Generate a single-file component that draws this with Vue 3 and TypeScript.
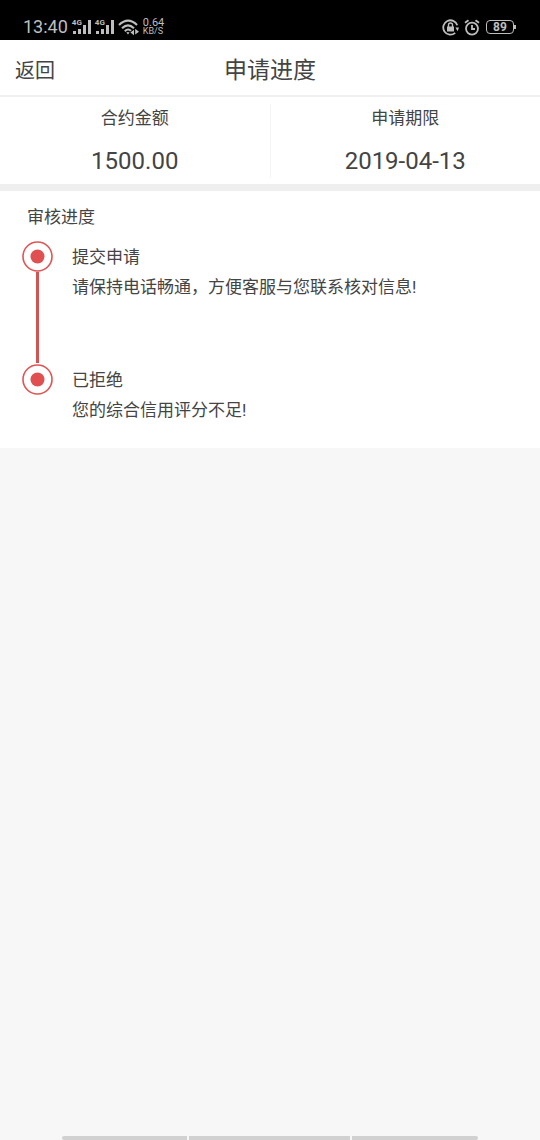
<script setup lang="ts">
interface SummaryItem {
  label: string
  value: string
}

interface Step {
  title: string
  detail: string
}

const summary: SummaryItem[] = [
  { label: '合约金额', value: '1500.00' },
  { label: '申请期限', value: '2019-04-13' },
]

const steps: Step[] = [
  { title: '提交申请', detail: '请保持电话畅通，方便客服与您联系核对信息!' },
  { title: '已拒绝', detail: '您的综合信用评分不足!' },
]

const sims = ['4G', '4G']
</script>

<template>
  <div class="screen">
    <div class="status">
      <div class="status-group">
        <span class="clock">13:40</span>
        <span v-for="(sim, i) in sims" :key="i" class="signal">
          <span class="network">{{ sim }}</span>
          <svg width="19" height="14" viewBox="0 0 19 14" aria-hidden="true">
            <path d="M1 11h3v3H1zM6 9h3v5H6zM11 5h3v9h-3zM16 0h3v14h-3z" />
          </svg>
        </span>
        <svg class="wifi" width="22" height="17" viewBox="0 0 22 17" aria-hidden="true">
          <g class="stroke wave">
            <path d="M1 6Q10 -2.6 19 6" />
            <path d="M4 9.2Q10 3.4 16 9.2" />
            <path d="M6.8 12.2Q10 9 13 11.8" />
          </g>
          <path d="M8.3 13.6Q10 12.2 11.5 13.6L10 15.5zM16 10.8v5.4l-3.6-2.7zM17.2 9.8l3.8 2.9-3.8 2.9z" />
        </svg>
        <span class="speed"><span class="rate">0.64</span><span class="unit">KB/S</span></span>
      </div>
      <div class="status-group">
        <svg width="17" height="17" viewBox="0 0 17 17" aria-hidden="true">
          <path class="stroke" d="M15.3 6.2A7.2 7.2 0 1 0 13.2 13.9" />
          <path d="M5 7.4h7v5H5zM13.4 8.6H17l-1.4 3.6z" />
          <path class="stroke shackle" d="M6.5 8V6a2 2 0 0 1 4 0v2" />
        </svg>
        <svg class="alarm" width="16" height="17" viewBox="0 0 16 17" aria-hidden="true">
          <g class="stroke">
            <circle cx="8" cy="9.6" r="6" />
            <path d="M8 6v4h3M1 3.8L4.5 1.2M15 3.8L11.5 1.2" />
          </g>
        </svg>
        <span class="battery">89</span>
      </div>
    </div>

    <header class="header">
      <button class="back" type="button">返回</button>
      <h1 class="title">申请进度</h1>
    </header>

    <dl class="summary">
      <div v-for="item in summary" :key="item.label" class="cell">
        <dt>{{ item.label }}</dt>
        <dd>{{ item.value }}</dd>
      </div>
    </dl>

    <main class="progress">
      <h2 class="heading">审核进度</h2>
      <ol class="steps">
        <li v-for="step in steps" :key="step.title" class="step">
          <div class="marker">
            <svg width="31" height="31" viewBox="0 0 31 31" aria-hidden="true">
              <circle class="ring" cx="15.5" cy="15.5" r="14.5" />
              <circle class="dot" cx="15.5" cy="15.5" r="7" />
            </svg>
          </div>
          <div class="text">
            <h3>{{ step.title }}</h3>
            <p>{{ step.detail }}</p>
          </div>
        </li>
      </ol>
    </main>

    <div class="navbar" aria-hidden="true"><i></i><i></i><i></i></div>
  </div>
</template>

<style>
body {
  margin: 0;
  background: #f7f7f7;
}
</style>

<style scoped>
.screen {
  display: flex;
  flex-direction: column;
  min-height: 100vh;
  background: #f7f7f7;
  color: #444;
  font-family: Roboto, "Noto Sans CJK SC", sans-serif;
  font-size: 17px;
}

.status {
  display: flex;
  justify-content: space-between;
  box-sizing: border-box;
  height: 40px;
  padding: 14px 26px 0 23px;
  background: #000;
  color: #bebebe;
}

.status-group {
  display: flex;
  align-items: center;
  height: 26px;
}

.status svg {
  display: block;
  fill: #bebebe;
}

.status .stroke {
  fill: none;
  stroke: #bebebe;
  stroke-width: 1.8;
}

.status .wave {
  stroke-width: 2.1;
}

.status .shackle {
  stroke-width: 1.4;
}

.clock {
  margin-right: 4px;
  font-size: 18px;
  line-height: 28px;
}

.signal {
  position: relative;
  margin-right: 4px;
}

.network {
  position: absolute;
  top: -1px;
  left: 0;
  font-size: 8px;
  font-weight: 700;
  line-height: 8px;
}

.wifi {
  margin-right: 3px;
}

.speed {
  display: flex;
  flex-direction: column;
}

.rate {
  font-size: 11px;
  line-height: 9px;
}

.unit {
  font-size: 9px;
  line-height: 9px;
}

.alarm {
  margin: 0 6px 0 5px;
}

.battery {
  position: relative;
  box-sizing: border-box;
  width: 28px;
  height: 14px;
  border: 1px solid #bebebe;
  border-radius: 4px;
  font-size: 12px;
  font-weight: 700;
  line-height: 13px;
  text-align: center;
}

.battery::after {
  content: "";
  position: absolute;
  top: 4px;
  right: -3px;
  width: 2px;
  height: 4px;
  background: #bebebe;
}

.header {
  display: grid;
  grid-template-columns: 1fr auto 1fr;
  align-items: center;
  height: 55px;
  padding: 0 15px;
  border-bottom: 2px solid #f0f0f0;
  background: #fff;
}

.back {
  justify-self: start;
  padding: 6px 0 0;
  border: 0;
  background: none;
  color: inherit;
  font: inherit;
  font-size: 20px;
  line-height: 30px;
  cursor: pointer;
}

.title {
  margin: 0;
  padding-top: 6px;
  font-size: 23px;
  font-weight: 400;
  line-height: 32px;
}

.summary {
  display: flex;
  margin: 0;
  padding: 7px 0 6px;
  border-bottom: 7px solid #efefef;
  background: #fff;
  text-align: center;
}

.cell {
  box-sizing: border-box;
  flex: 1 1 0;
}

.cell:not(:last-child) {
  border-right: 1px solid #f5f5f5;
}

dt {
  line-height: 28px;
}

dd {
  margin: 12px 0 0;
  font-size: 24px;
  line-height: 34px;
}

.progress {
  padding: 10px 22px 24px;
  background: #fff;
}

.heading {
  margin: 0 0 8px 5px;
  font-size: 17px;
  font-weight: 400;
  line-height: 32px;
}

.steps {
  margin: 0;
  padding: 0;
  list-style: none;
}

.step {
  display: flex;
  gap: 19px;
}

.step:not(:last-child) {
  min-height: 123px;
}

.marker {
  display: flex;
  flex-direction: column;
  align-items: center;
  flex: none;
}

.marker svg {
  display: block;
}

.step:not(:last-child) .marker::after {
  content: "";
  flex: 1;
  width: 3px;
  margin-bottom: 1px;
  background: #d15452;
}

.ring {
  fill: none;
  stroke: #df5554;
  stroke-width: 1.6;
}

.dot {
  fill: #e05050;
}

.text h3,
.text p {
  margin: 0;
  font-size: 17px;
  font-weight: 400;
}

.text h3 {
  line-height: 32px;
}

.text p {
  line-height: 28px;
}

.navbar {
  display: grid;
  grid-template-columns: 125fr 160fr 126fr;
  gap: 2px;
  width: 77%;
  height: 4px;
  margin: auto auto 0;
}

.navbar i {
  background: #d1d1d1;
}

.navbar i:first-child {
  border-radius: 2px 0 0 2px;
}

.navbar i:last-child {
  border-radius: 0 2px 2px 0;
}
</style>
